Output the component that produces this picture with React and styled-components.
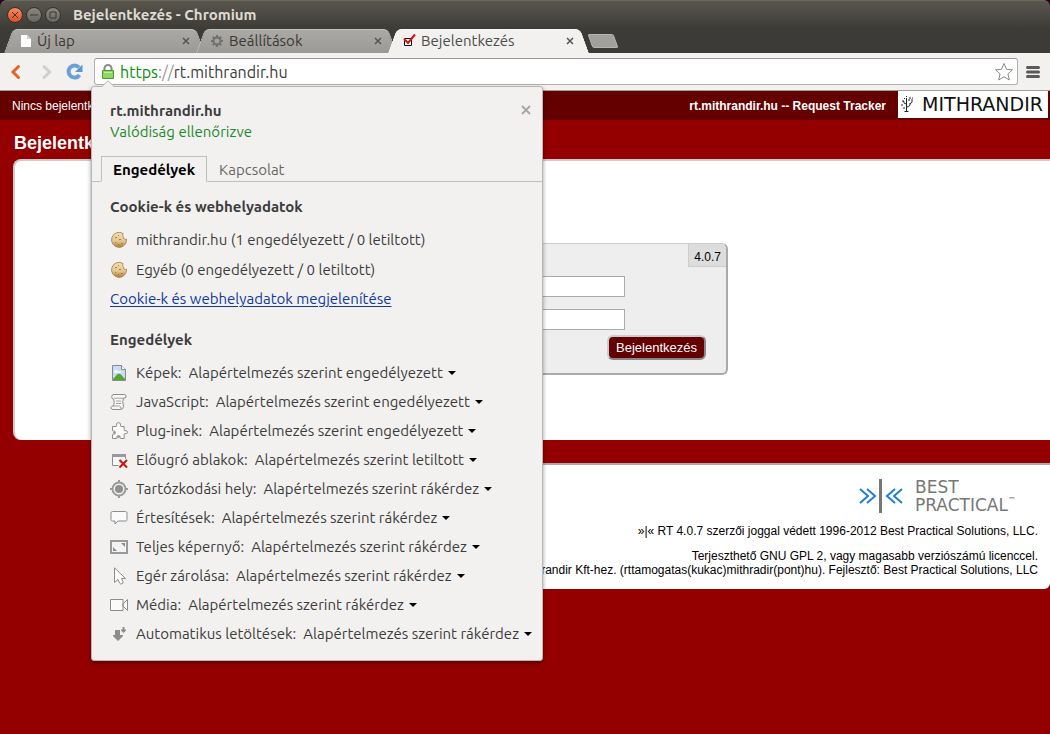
import React, { useState } from "react";
import styled, { createGlobalStyle, css } from "styled-components";

const uiFont = `"Ubuntu", "Noto Sans", "Open Sans", sans-serif`;
const pageFont = `"Liberation Sans", Arial, sans-serif`;

const permissions = [
  { id: "images", label: "Képek:", value: "engedélyezett" },
  { id: "javascript", label: "JavaScript:", value: "engedélyezett" },
  { id: "plugins", label: "Plug-inek:", value: "engedélyezett" },
  { id: "popups", label: "Előugró ablakok:", value: "letiltott" },
  { id: "location", label: "Tartózkodási hely:", value: "rákérdez" },
  { id: "notifications", label: "Értesítések:", value: "rákérdez" },
  { id: "fullscreen", label: "Teljes képernyő:", value: "rákérdez" },
  { id: "mouselock", label: "Egér zárolása:", value: "rákérdez" },
  { id: "media", label: "Média:", value: "rákérdez" },
  { id: "downloads", label: "Automatikus letöltések:", value: "rákérdez" },
];

const icons = {
  images: (
    <>
      <path d="M2.500 1.500h9l4 4v11h-13z" fill="#c9dcf7" stroke="#8a8a8a" />
      <path d="M11.500 1.500v4h4" fill="#fff" stroke="#8a8a8a" />
      <path d="M4 7q2-3 4 0h3v2H4z" fill="#eef4ff" />
      <path d="M3 16q0-2.500 2-3 2-3.500 4-3.500t4 3.500q2 .5 2 3z" fill="#55a630" />
    </>
  ),
  javascript: (
    <g fill="#f8f8f8" stroke="#8c8c8c">
      <path d="M4 1.500h10.500q2 0 1.500 2.500q-.5 1.500-2.500 1.200q-1.500 3 0 8q0 3.300-3 3.300H3q-2 0-2-2q.3-1.700 2.500-1.500q1.500-4 0-7q-2 0-1.800-2.500q.3-2 2.300-2z" />
      <path d="M4 5.200h9.500M6 8h5M6 10.500h5M3.500 13h6q1.500 0 1.500 3.500" fill="none" stroke="#a0a0a0" />
    </g>
  ),
  plugins: (
    <>
      <path
        d="M2.500 4.500H6q1 0 .6-1.200Q6 .6 8.500 .6t2 2.700q-.3 1.200 .7 1.200h3V8q0 1 1 .7q2.300-.4 2.300 1.500t-2.300 1.500q-1-.3-1 .7v4.100h-3.500q-.8 0-.6-1Q10.500 13.500 8.500 13.500t-1.700 2q.2 1-.7 1H2.500V13q0-1 1-.8Q5.500 12.200 5.500 10.500T3.500 9q-1 .3-1-.7z"
        fill="#fafafa"
        stroke="#8c8c8c"
      />
      <path d="M3 10h2v1.500H3zM7.500 14h2v2h-2z" fill="#999" />
    </>
  ),
  popups: (
    <>
      <path d="M2.500 3.500h13v11h-13z" fill="#f8f8f8" stroke="#8c8c8c" />
      <path d="M2 3h14v3H2z" fill="#999" />
      <path d="m9.500 9 7.500 7.500M17 9l-7.500 7.500" stroke="#f2f1f0" strokeWidth="4" />
      <path d="m9.500 9 7.500 7.500M17 9l-7.500 7.500" stroke="#c81414" strokeWidth="2" />
    </>
  ),
  location: (
    <g fill="none" stroke="#9a9a9a" strokeWidth="2">
      <circle cx="9" cy="9" r="6.500" />
      <circle cx="9" cy="9" r="4" fill="#8f8f8f" stroke="none" />
      <path d="M9 0v3M9 15v3M0 9h3M15 9h3" />
    </g>
  ),
  notifications: (
    <path
      d="M2.500 2.500h13q1.500 0 1.500 1.500v6.500q0 1.500-1.500 1.500H8l-3 3v-3H2.500Q1 12 1 10.500V4q0-1.500 1.500-1.500z"
      fill="#fafafa"
      stroke="#8c8c8c"
    />
  ),
  fullscreen: (
    <>
      <path d="M1 3h16v12H1z" fill="#f4f4f4" stroke="#999" strokeWidth="2" />
      <path d="M11 5h4v4zM3 9v4h4z" fill="#8c8c8c" />
    </>
  ),
  mouselock: (
    <path
      d="M4.500 .8v14.700l3.500-3 1.500 3.500q1 1.500 2.500 .8t1-2l-1.500-3.300h4z"
      fill="#fafafa"
      stroke="#8c8c8c"
    />
  ),
  media: (
    <path
      d="M.5 3.500h12.500v11H.5zM13 8l4.500-4.500v11L13 10z"
      fill="#fafafa"
      stroke="#8c8c8c"
    />
  ),
  downloads: (
    <path
      d="M5 5h5v5h3v1l-5 5-5-5v-1h2zM12.500 2h2v2.500H16v1L13.500 8 11 5.500v-1h1.500z"
      fill="#8c8c8c"
    />
  ),
};

const Cookie = () => (
  <Icon viewBox="0 0 18 18" aria-hidden="true">
    <defs>
      <linearGradient id="dough" x1="0" y1="0" x2="0" y2="1">
        <stop offset="0" stopColor="#f3e2bd" />
        <stop offset=".6" stopColor="#e2c48e" />
        <stop offset="1" stopColor="#a9763a" />
      </linearGradient>
    </defs>
    <path
      d="M13 2.500A7.500 7.500 0 1 0 16.500 8q-1 .8-1.800 0-1.400 0-1.200-1.800-1.500-1-.5-3.700z"
      fill="url(#dough)"
      stroke="#b08c58"
    />
    <path d="M5 6h2v1H5zM9 8h2v1H9zM5 11h1v1H5zM11 12h2v1h-2zM8 13h1v1H8zM8 4h1v1H8z" fill="#a87c45" />
  </Icon>
);

const Cross = () => (
  <svg width="8" height="8" viewBox="0 0 8 8" aria-hidden="true">
    <path d="m1 1 6 6M7 1 1 7" stroke="currentColor" strokeWidth="1.500" />
  </svg>
);

const PermissionRow = ({ id, label, value }) => {
  const [current, setCurrent] = useState(value);
  return (
    <Row $height={29}>
      <Icon viewBox="0 0 18 18" aria-hidden="true">
        {icons[id]}
      </Icon>
      <label htmlFor={id}>{label}</label>
      <Choice>
        <Select id={id} value={current} onChange={(e) => setCurrent(e.target.value)}>
          {["engedélyezett", "letiltott", "rákérdez"].map((option) => (
            <option key={option} value={option}>
              Alapértelmezés szerint {option}
            </option>
          ))}
        </Select>
        <svg width="8" height="4" viewBox="0 0 8 4" aria-hidden="true">
          <path d="M0 0h8L4 4z" />
        </svg>
      </Choice>
    </Row>
  );
};

const SiteInfo = ({ onClose }) => (
  <Bubble role="dialog" aria-label="rt.mithrandir.hu">
    <Pointer viewBox="0 0 14 8" aria-hidden="true">
      <path d="M0 7.500 7 .7l7 6.800V8H0z" fill="#f2f1f0" />
      <path d="M0 6.500h1L7 .7l6 5.800h1" fill="none" stroke="#b4b4b4" />
    </Pointer>
    <BubbleHead>
      <div>
        <Strong>rt.mithrandir.hu</Strong>
        <Verified>Valódiság ellenőrizve</Verified>
      </div>
      <CloseBubble type="button" aria-label="Bezárás" onClick={onClose}>
        <svg width="10" height="10" viewBox="0 0 10 10" aria-hidden="true">
          <path d="m1 1 8 8M9 1 1 9" stroke="#a8a8a8" strokeWidth="2" />
        </svg>
      </CloseBubble>
    </BubbleHead>
    <InfoTabs role="tablist">
      <InfoTab type="button" role="tab" aria-selected="true" $active>
        Engedélyek
      </InfoTab>
      <InfoTab type="button" role="tab" aria-selected="false">
        Kapcsolat
      </InfoTab>
    </InfoTabs>
    <BubbleBody>
      <Strong as="h2">Cookie-k és webhelyadatok</Strong>
      <Group>
        <Row $height={30}>
          <Cookie />
          mithrandir.hu (1 engedélyezett / 0 letiltott)
        </Row>
        <Row $height={30}>
          <Cookie />
          Egyéb (0 engedélyezett / 0 letiltott)
        </Row>
        <Link href="#cookies">Cookie-k és webhelyadatok megjelenítése</Link>
      </Group>
      <Strong as="h2">Engedélyek</Strong>
      <Group>
        {permissions.map((p) => (
          <PermissionRow key={p.id} {...p} />
        ))}
      </Group>
    </BubbleBody>
  </Bubble>
);

const Browser = ({ children }) => {
  const [url, setUrl] = useState("rt.mithrandir.hu");
  const [open, setOpen] = useState(true);
  return (
    <Frame>
      <Chrome>
        <TitleBar>
          <WindowButton type="button" aria-label="Bezárás" $close>
            <svg viewBox="0 0 16 16"><path d="m5 5 6 6M11 5l-6 6" /></svg>
          </WindowButton>
          <WindowButton type="button" aria-label="Kis méret">
            <svg viewBox="0 0 16 16"><path d="M4 8h8" /></svg>
          </WindowButton>
          <WindowButton type="button" aria-label="Teljes méret">
            <svg viewBox="0 0 16 16"><path d="M5 5h6v6H5z" /></svg>
          </WindowButton>
          <WindowTitle>Bejelentkezés - Chromium</WindowTitle>
        </TitleBar>
        <TabStrip>
          <Tab>
            <TabIcon viewBox="0 0 16 16" aria-hidden="true">
              <path d="M4 2h6l4 4v8H4z" fill="#fff" />
              <path d="M10 2v4h4z" fill="#d0d0d0" />
            </TabIcon>
            <TabText>Új lap</TabText>
            <CloseTab type="button" aria-label="Lap bezárása"><Cross /></CloseTab>
          </Tab>
          <Tab>
            <TabIcon viewBox="0 0 16 16" aria-hidden="true">
              <circle cx="8" cy="8" r="3.500" fill="none" stroke="#707070" strokeWidth="2" />
              <path
                d="M8 2v2M8 12v2M2 8h2M12 8h2M3.800 3.800l1.400 1.400M10.800 10.800l1.400 1.400M12.200 3.800l-1.400 1.400M5.200 10.800l-1.400 1.400"
                stroke="#707070"
                strokeWidth="2"
              />
            </TabIcon>
            <TabText>Beállítások</TabText>
            <CloseTab type="button" aria-label="Lap bezárása"><Cross /></CloseTab>
          </Tab>
          <Tab $active>
            <TabIcon viewBox="0 0 16 16" aria-hidden="true">
              <path d="M3.500 5.500h7v7h-7z" fill="#fff" stroke="#111" />
              <path d="m3 6 4 4 7-8.500" fill="none" stroke="#e01010" strokeWidth="2" />
            </TabIcon>
            <TabText>Bejelentkezés</TabText>
            <CloseTab type="button" aria-label="Lap bezárása"><Cross /></CloseTab>
          </Tab>
          <NewTab type="button" aria-label="Új lap" />
        </TabStrip>
        <Toolbar>
          <ToolButton type="button" aria-label="Vissza">
            <svg width="20" height="20" viewBox="0 0 20 20">
              <path d="M11.500 4.500 6 10l5.500 5.500" fill="none" stroke="#e0642c" strokeWidth="3" strokeLinecap="round" />
            </svg>
          </ToolButton>
          <ToolButton type="button" aria-label="Előre">
            <svg width="20" height="20" viewBox="0 0 20 20">
              <path d="m8 4.500 5.500 5.500L8 15.500" fill="none" stroke="#d0cfce" strokeWidth="3" strokeLinecap="round" />
            </svg>
          </ToolButton>
          <ToolButton type="button" aria-label="Újratöltés">
            <svg width="20" height="20" viewBox="0 0 20 20">
              <path d="M14 5.500A6 6 0 1 0 14.500 13" fill="none" stroke="#6a9fd8" strokeWidth="4" />
              <path d="M17.500 2.500V10H10z" fill="#5b95d2" />
            </svg>
          </ToolButton>
          <AddressBar>
            <LockButton type="button" aria-label="Webhely adatai" onClick={() => setOpen(!open)}>
              <svg width="12" height="16" viewBox="0 0 12 16">
                <path d="M2.500 8V4.500a3.500 3.500 0 0 1 7 0V8" fill="none" stroke="#8a8a8a" strokeWidth="2" />
                <path d="M.5 6.500h11v8H.5z" fill="#8fd663" stroke="#4b9a2e" />
                <path d="M2 8.500h8" stroke="#c0efa4" />
              </svg>
            </LockButton>
            <Scheme htmlFor="url"><b>https</b>://</Scheme>
            <UrlInput id="url" value={url} onChange={(e) => setUrl(e.target.value)} />
            <StarButton type="button" aria-label="Könyvjelző">
              <svg width="20" height="20" viewBox="0 0 20 20">
                <path
                  d="m10 1.500 2.500 5.800 6 .5-4.600 4.100 1.500 6.100L10 14.800 4.600 18l1.500-6.100L1.500 7.800l6-.5z"
                  fill="#fff"
                  stroke="#8a8a8a"
                  strokeLinejoin="round"
                />
              </svg>
            </StarButton>
            {open && <SiteInfo onClose={() => setOpen(false)} />}
          </AddressBar>
          <ToolButton type="button" aria-label="Menü">
            <svg width="14" height="14" viewBox="0 0 14 14">
              <path d="M1.500 2.500h11M1.500 7h11M1.500 11.500h11" stroke="#5a5a5a" strokeWidth="3" strokeLinecap="round" />
            </svg>
          </ToolButton>
        </Toolbar>
      </Chrome>
      {children}
    </Frame>
  );
};

export default function App() {
  return (
    <>
      <GlobalStyle />
      <Browser>
        <Page>
          <QuickBar>
            <span>Nincs bejelentkezve.</span>
            <SiteName>rt.mithrandir.hu -- Request Tracker</SiteName>
            <Logo>
              <svg width="14" height="20" viewBox="0 0 14 20" aria-hidden="true">
                <g fill="none" stroke="#222">
                  <path d="M5.500 3v14M3.500 16.500h4M5.500 12q4 0 3.500-4M9 9q3-1 2-5M5.500 9Q2.500 9 2.500 6" />
                  <path d="M1 6h2M0 10h2M2 13h3M7 5h2M8 3h4M3 3.500h1M5 1.500h1" strokeDasharray="2 1" />
                </g>
              </svg>
              MITHRANDIR
            </Logo>
          </QuickBar>
          <PageTitle>Bejelentkezés</PageTitle>
          <Panel>
            <LoginBox>
              <LoginHead>
                <LoginTitle>Bejelentkezés</LoginTitle>
                <Version>4.0.7</Version>
              </LoginHead>
              <Field>
                <label htmlFor="user">Felhasználónév:</label>
                <input id="user" type="text" />
              </Field>
              <Field>
                <label htmlFor="pass">Jelszó:</label>
                <input id="pass" type="password" />
              </Field>
              <Submit type="submit">Bejelentkezés</Submit>
            </LoginBox>
          </Panel>
          <Footer>
            <Vendor>
              <svg width="44" height="34" viewBox="0 0 44 34" aria-hidden="true">
                <path d="M21.500 0v34" stroke="#777" strokeWidth="3" />
                <path
                  d="m1 10 8 7-8 7M8 10l8 7-8 7M43 10l-8 7 8 7M36 10l-8 7 8 7"
                  fill="none"
                  stroke="#1f7fd0"
                  strokeWidth="2"
                />
              </svg>
              <VendorName>
                <span>BEST</span>
                <span>PRACTICAL</span>
                <sup>™</sup>
              </VendorName>
            </Vendor>
            <p>»|« RT 4.0.7 szerzői joggal védett 1996-2012 Best Practical Solutions, LLC.</p>
            <p>
              Terjeszthető GNU GPL 2, vagy magasabb verziószámú licenccel.
              <br />
              Forduljon a Mithrandir Kft-hez. (rttamogatas(kukac)mithradir(pont)hu). Fejlesztő: Best Practical
              Solutions, LLC
            </p>
          </Footer>
        </Page>
      </Browser>
    </>
  );
}

const GlobalStyle = createGlobalStyle`
  * {
    box-sizing: border-box;
  }
  body {
    margin: 0;
    background: #2c001e;
  }
  button, input, select {
    font: inherit;
    color: inherit;
    margin: 0;
  }
  h1, h2, p {
    margin: 0;
  }
`;

const plainButton = css`
  display: flex;
  align-items: center;
  justify-content: center;
  padding: 0;
  border: none;
  background: none;
  cursor: pointer;
`;

const Frame = styled.div`
  display: flex;
  flex-direction: column;
  min-height: 100vh;
  overflow: hidden;
`;

const Chrome = styled.header`
  position: relative;
  z-index: 2;
  border-radius: 7px 7px 0 0;
  background: linear-gradient(#5a574e, #3c3b37 29px);
  font: 15px/20px ${uiFont};
  color: #3c3c3c;
`;

const TitleBar = styled.div`
  display: flex;
  align-items: center;
  gap: 3px;
  height: 29px;
  padding: 0 7px;
  border-top: 1px solid #6b685e;
  border-radius: 7px 7px 0 0;
`;

const WindowButton = styled.button`
  ${plainButton}
  width: 16px;
  height: 16px;
  border: 1px solid #33322e;
  border-radius: 50%;
  background: ${({ $close }) =>
    $close ? "linear-gradient(#f58a63, #e2501f)" : "linear-gradient(#8a887e, #6a685f)"};
  svg {
    width: 16px;
    height: 16px;
    flex: none;
    fill: none;
    stroke: #3a3833;
  }
`;

const WindowTitle = styled.div`
  margin-left: 9px;
  font-weight: 700;
  color: #dfdbd2;
`;

const TabStrip = styled.div`
  display: flex;
  height: 24px;
  padding-left: 4px;
`;

const Tab = styled.div`
  position: relative;
  z-index: ${({ $active }) => ($active ? 2 : 0)};
  display: flex;
  align-items: center;
  flex: 0 1 201px;
  height: 24px;
  margin-right: -9px;
  padding: 0 15px 0 13px;
  isolation: isolate;
  color: ${({ $active }) => ($active ? "#4c4c4c" : "#3a3833")};
  &::before,
  &::after {
    content: "";
    position: absolute;
    z-index: -1;
    top: 0;
    bottom: 0;
    background: ${({ $active }) => ($active ? "#f2f1f0" : "linear-gradient(#aaa9a6, #9b9a97)")};
    border: 0 solid ${({ $active }) => ($active ? "#f8f8f7" : "#c2c1be")};
    border-top-width: 1px;
  }
  &::before {
    left: 0;
    right: 50%;
    border-left-width: 1px;
    border-radius: 5px 0 0 0;
    transform: skewX(-20deg);
    transform-origin: bottom;
  }
  &::after {
    left: 45%;
    right: 0;
    border-right-width: 1px;
    border-radius: 0 5px 0 0;
    transform: skewX(20deg);
    transform-origin: bottom;
  }
`;

const TabIcon = styled.svg`
  width: 16px;
  height: 16px;
  flex: none;
`;

const TabText = styled.span`
  flex: 1;
  margin-left: 4px;
  white-space: nowrap;
`;

const CloseTab = styled.button`
  ${plainButton}
  width: 8px;
  height: 16px;
  color: #555;
`;

const NewTab = styled.button`
  ${plainButton}
  width: 26px;
  height: 14px;
  margin: 5px 0 0 10px;
  border: 1px solid #b5b4b1;
  border-radius: 2px;
  background: #a1a09d;
  transform: skewX(20deg);
`;

const Toolbar = styled.div`
  display: flex;
  align-items: center;
  height: 38px;
  padding: 0 7px;
  border-bottom: 1px solid #a0a09e;
  background: #f2f1f0;
`;

const ToolButton = styled.button`
  ${plainButton}
  width: 20px;
  height: 24px;
  margin-right: 9px;
  &:last-child {
    margin: 0 0 0 5px;
  }
`;

const AddressBar = styled.div`
  position: relative;
  display: flex;
  align-items: center;
  flex: 1;
  height: 27px;
  padding: 0 3px 0 7px;
  border: 1px solid #b2b1b0;
  border-top-color: #999;
  border-radius: 3px;
  background: #fff;
  font-size: 16px;
`;

const LockButton = styled.button`
  ${plainButton}
  width: 12px;
`;

const Scheme = styled.label`
  margin-left: 6px;
  color: #999;
  b {
    font-weight: 400;
    color: #0a8f0a;
  }
`;

const UrlInput = styled.input`
  flex: 1;
  min-width: 0;
  padding: 0;
  border: none;
  outline: none;
  background: none;
`;

const StarButton = styled.button`
  ${plainButton}
`;

const Bubble = styled.section`
  position: absolute;
  top: 27px;
  left: -4px;
  width: 452px;
  padding-bottom: 12px;
  border: 1px solid #b8b7b6;
  border-radius: 3px;
  background: #f2f1f0;
  box-shadow: 0 2px 4px rgba(0, 0, 0, 0.4);
  font-size: 15px;
`;

const Pointer = styled.svg`
  position: absolute;
  top: -7px;
  left: 9px;
  width: 14px;
  height: 8px;
`;

const BubbleHead = styled.div`
  display: flex;
  justify-content: space-between;
  padding: 14px 10px 0 18px;
`;

const Strong = styled.h1`
  font-size: 15px;
  line-height: 20px;
  font-weight: 700;
`;

const Verified = styled.p`
  margin-top: 1px;
  color: #1c8a2c;
`;

const CloseBubble = styled.button`
  ${plainButton}
  width: 12px;
  height: 18px;
`;

const InfoTabs = styled.div`
  display: flex;
  margin-top: 14px;
  padding-left: 9px;
  box-shadow: inset 0 -1px #c0bfbe;
`;

const InfoTab = styled.button`
  ${plainButton}
  height: 26px;
  padding: 2px 11px 0;
  color: #666;
  border: 1px solid transparent;
  ${({ $active }) =>
    $active &&
    css`
      color: #000;
      font-weight: 700;
      border-color: #c0bfbe;
      border-bottom-color: #f2f1f0;
      background: #f2f1f0;
    `}
`;

const BubbleBody = styled.div`
  padding: 15px 0 0 18px;
`;

const Group = styled.div`
  margin: 8px 0 0;
  & + h2 {
    margin-top: 21px;
  }
`;

const Row = styled.div`
  display: flex;
  align-items: center;
  height: ${({ $height }) => $height}px;
  white-space: nowrap;
`;

const Icon = styled.svg`
  width: 18px;
  height: 18px;
  flex: none;
  margin-right: 8px;
`;

const Choice = styled.div`
  display: flex;
  align-items: center;
  gap: 5px;
  margin-left: 7px;
`;

const Select = styled.select`
  appearance: none;
  field-sizing: content;
  padding: 0;
  border: none;
  background: none;
  cursor: pointer;
`;

const Link = styled.a`
  display: block;
  width: fit-content;
  height: 20px;
  margin-top: 4px;
  color: #0f3a9c;
  text-underline-offset: 2px;
`;

const Page = styled.main`
  flex: 1;
  background: #940000;
  font: 12px/14px ${pageFont};
  color: #000;
`;

const QuickBar = styled.div`
  display: flex;
  align-items: center;
  height: 29px;
  padding: 0 2px 0 12px;
  background: #640000;
  color: #fff;
`;

const SiteName = styled.span`
  margin-left: auto;
  font-weight: 700;
`;

const Logo = styled.div`
  display: flex;
  align-items: center;
  align-self: flex-start;
  justify-content: space-between;
  width: 150px;
  height: 27px;
  margin-left: 12px;
  padding: 0 5px 0 3px;
  background: #fff;
  color: #111;
  font: 19px/27px "DejaVu Sans", sans-serif;
`;

const PageTitle = styled.h1`
  padding: 13px 14px 6px;
  font-size: 18px;
  line-height: 20px;
  color: #fff;
`;

const Panel = styled.section`
  height: 281px;
  margin-left: 13px;
  padding-top: 82px;
  border: 2px solid #ccc;
  border-width: 2px 0 0 2px;
  border-radius: 8px 0 0 8px;
  background: #fff;
`;

const LoginBox = styled.form`
  display: flex;
  flex-direction: column;
  width: 391px;
  height: 132px;
  margin: 0 auto;
  border: 1px solid #ccc;
  border-width: 1px 2px 2px 1px;
  border-right-color: #aaa;
  border-bottom-color: #aaa;
  border-radius: 6px;
  background: #eee;
`;

const LoginHead = styled.div`
  display: flex;
  justify-content: space-between;
  margin-bottom: 9px;
`;

const LoginTitle = styled.h2`
  padding: 4px 8px;
  font-size: 12px;
`;

const Version = styled.span`
  padding: 6px 5px 2px;
  border: 1px solid #ccc;
  border-width: 0 0 1px 1px;
  border-radius: 0 5px 0 0;
  background: #ddd;
`;

const Field = styled.div`
  display: flex;
  align-items: center;
  justify-content: flex-end;
  gap: 10px;
  margin: 0 101px 12px 0;
  input {
    width: 180px;
    height: 21px;
    border: 1px solid #aaa;
    background: #fff;
  }
`;

const Submit = styled.button`
  align-self: flex-end;
  height: 25px;
  margin: -7px 20px 0 0;
  padding: 0 7px;
  border: 2px solid #ccc;
  border-right-color: #888;
  border-bottom-color: #888;
  border-radius: 6px;
  background: #640000;
  color: #fff;
  font-size: 13px;
`;

const Footer = styled.footer`
  height: 126px;
  margin: 23px 0 0 40%;
  padding: 14px 12px 0;
  border-top: 2px solid #aaa;
  border-radius: 0 0 6px 6px;
  background: #fff;
  text-align: right;
  white-space: nowrap;
  p {
    margin-bottom: 11px;
  }
`;

const Vendor = styled.div`
  display: flex;
  align-items: center;
  justify-content: flex-end;
  gap: 12px;
  height: 34px;
  margin-bottom: 11px;
`;

const VendorName = styled.div`
  display: grid;
  grid-template-columns: auto auto;
  width: 123px;
  justify-content: start;
  font: 17px/18px "DejaVu Sans", sans-serif;
  color: #777;
  text-align: left;
  span:first-child {
    grid-column: 1 / -1;
  }
  sup {
    font-size: 8px;
    line-height: 10px;
  }
`;
